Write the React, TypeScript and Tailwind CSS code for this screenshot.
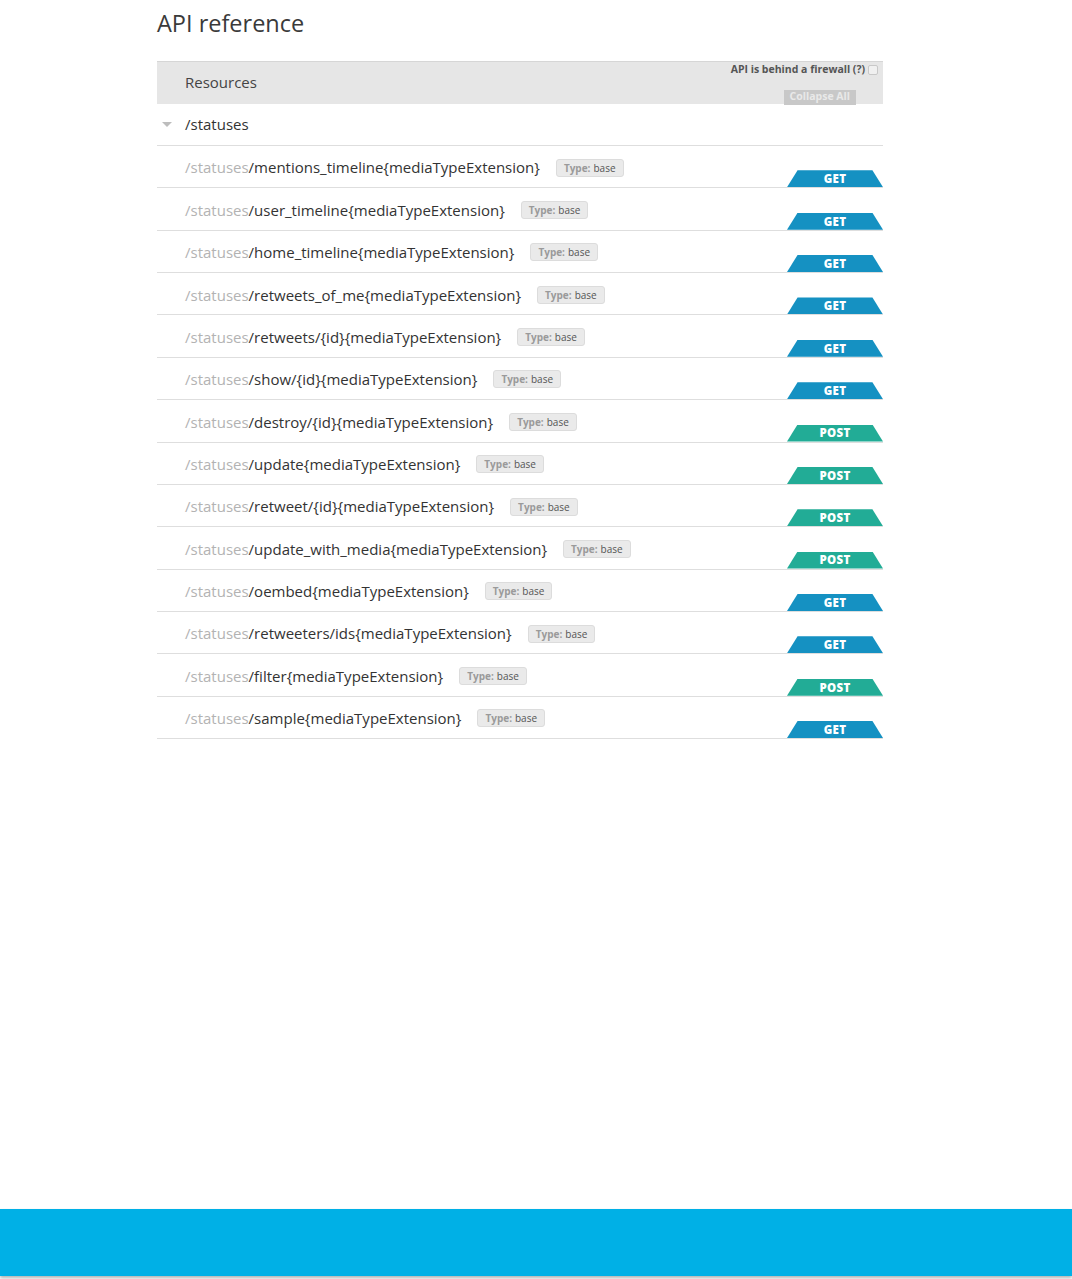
import React from "react";

type Method = "GET" | "POST";

const resources: { path: string; method: Method }[] = [
  { path: "/mentions_timeline{mediaTypeExtension}", method: "GET" },
  { path: "/user_timeline{mediaTypeExtension}", method: "GET" },
  { path: "/home_timeline{mediaTypeExtension}", method: "GET" },
  { path: "/retweets_of_me{mediaTypeExtension}", method: "GET" },
  { path: "/retweets/{id}{mediaTypeExtension}", method: "GET" },
  { path: "/show/{id}{mediaTypeExtension}", method: "GET" },
  { path: "/destroy/{id}{mediaTypeExtension}", method: "POST" },
  { path: "/update{mediaTypeExtension}", method: "POST" },
  { path: "/retweet/{id}{mediaTypeExtension}", method: "POST" },
  { path: "/update_with_media{mediaTypeExtension}", method: "POST" },
  { path: "/oembed{mediaTypeExtension}", method: "GET" },
  { path: "/retweeters/ids{mediaTypeExtension}", method: "GET" },
  { path: "/filter{mediaTypeExtension}", method: "POST" },
  { path: "/sample{mediaTypeExtension}", method: "GET" },
];

function MethodTab({ method }: { method: Method }) {
  return (
    <div
      className={`w-[96px] h-[17px] flex items-center justify-center text-[11.5px] font-extrabold text-white tracking-wide [clip-path:polygon(11%_0,89%_0,100%_100%,0_100%)] ${
        method === "GET" ? "bg-[#1591c2]" : "bg-[#22ac96]"
      }`}
    >
      {method}
    </div>
  );
}

function ResourceRow({ path, method }: { path: string; method: Method }) {
  return (
    <div className="h-[42.36px] border-b border-[#dedede] flex items-stretch">
      <div className="flex-1 flex items-center pl-[28px] pt-[2px]">
        <span className="text-[15px] text-[#333]">
          <span className="text-[#b3b3b3]">/statuses</span>
          {path}
        </span>
        <span className="ml-[16px] h-[18px] px-[7px] flex items-center rounded-[3px] bg-[#eaeaea] border border-[#dcdcdc] text-[10px] leading-none">
          <span className="font-bold text-[#9a9a9a]">Type:</span>
          <span className="ml-[3px] text-[#555]">base</span>
        </span>
      </div>
      <div className="flex items-end">
        <MethodTab method={method} />
      </div>
    </div>
  );
}

export default function App() {
  return (
    <div className="min-h-[1279px] flex flex-col bg-white font-['Open_Sans',sans-serif]">
      <div className="flex-1">
        <div className="w-[726px] ml-[157px]">
          <h1 className="h-[47px] flex items-center text-[23.5px] text-[#3a3a3a] leading-none">
            API reference
          </h1>
          <div className="mt-[14px] h-[43px] bg-[#e6e6e6] border-t border-[#d6d6d6] flex">
            <div className="flex-1 flex items-center pl-[28px] pb-[1px] text-[15px] text-[#444]">
              Resources
            </div>
            <div className="flex flex-col items-end pr-[5px]">
              <div className="flex items-center gap-[3px] text-[10.5px] font-bold text-[#555]">
                API is behind a firewall (?)
                <span className="w-[10px] h-[10px] rounded-[2px] border border-[#c8c8c8] bg-[#f0f0f0]" />
              </div>
              <div className="mt-[12px] mr-[22px] h-[15px] px-[6px] bg-[#c8c8c8] text-[10.5px] font-bold text-[#e9e9e9] flex items-center">
                Collapse All
              </div>
            </div>
          </div>
          <div className="h-[42px] border-b border-[#dedede] flex items-center">
            <div className="w-[28px] flex pl-[5px]">
              <div className="w-0 h-0 border-l-[5px] border-r-[5px] border-t-[5px] border-l-transparent border-r-transparent border-t-[#bdbdbd]" />
            </div>
            <span className="text-[15px] text-[#333]">/statuses</span>
          </div>
          {resources.map((r) => (
            <ResourceRow key={r.path} path={r.path} method={r.method} />
          ))}
        </div>
      </div>
      <div className="h-[67px] bg-[#00b0e6] shadow-[0_2px_3px_rgba(0,0,0,0.3)] mb-[3px]" />
    </div>
  );
}
